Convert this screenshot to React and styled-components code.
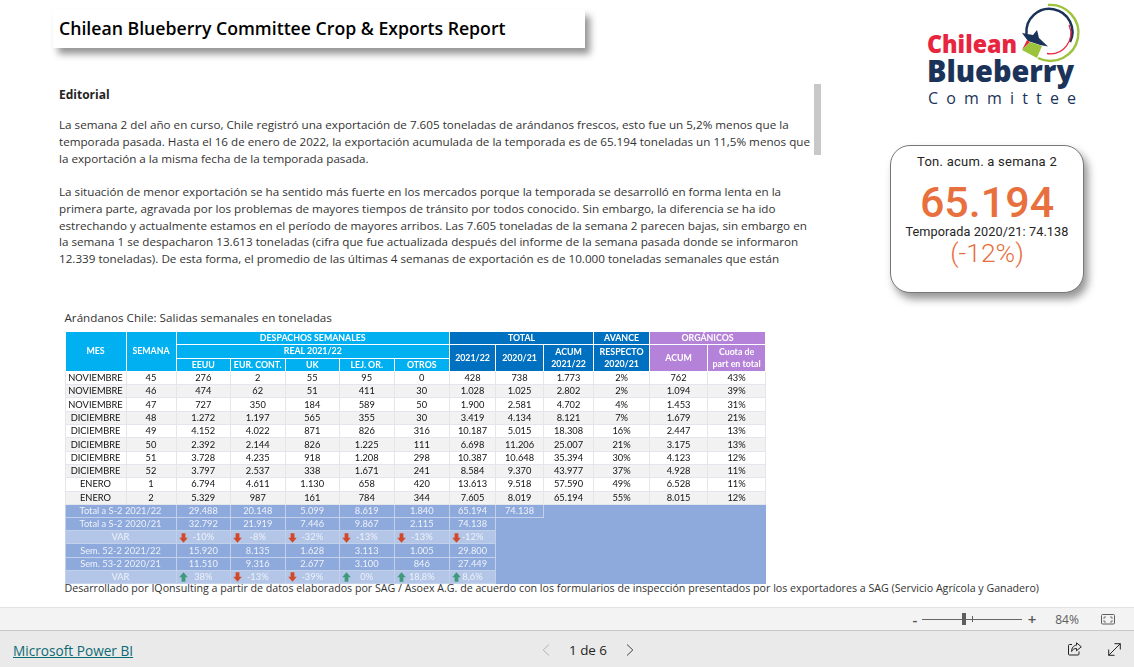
import React from 'react';
import styled, { createGlobalStyle } from 'styled-components';

const GlobalStyle = createGlobalStyle`
  html, body {
    margin: 0;
    padding: 0;
    background: #fff;
    overflow: hidden;
  }
  * { box-sizing: border-box; }
`;

const Page = styled.div`
  display: flex;
  flex-direction: column;
  width: 1134px;
  height: 667px;
  font-family: "Open Sans", "Noto Sans", sans-serif;
  color: #222;
`;
const Canvas = styled.main`
  display: grid;
  grid-template-columns: 870px 1fr;
  height: 607px;
  overflow: hidden;
`;
const LeftColumn = styled.section`
  display: flex;
  flex-direction: column;
  align-items: flex-start;
  padding-top: 10px;
  padding-left: 53px;
`;
const RightColumn = styled.aside`
  display: flex;
  flex-direction: column;
`;
const TitleBox = styled.div`
  display: flex;
  align-items: center;
  width: 532px;
  height: 38px;
  padding: 0 0 3px 6px;
  background: #fff;
  box-shadow: 5px 6px 7px rgba(0, 0, 0, 0.42);
`;
const Title = styled.h1`
  margin: 0;
  font-size: 17.68px;
  font-weight: 600;
  color: #000;
  white-space: nowrap;
`;
const Article = styled.article`
  position: relative;
  width: 762px;
  height: 188px;
  margin: 36px 0 0 6px;
  overflow: hidden;
`;
const Thumb = styled.div`
  position: absolute;
  top: 0;
  right: 0;
  width: 7px;
  height: 71px;
  background: #c8c8c8;
`;
const Heading = styled.h2`
  margin: 2px 0 14px;
  font-size: 12px;
  line-height: 17px;
  font-weight: 700;
  color: #252423;
`;
const Paragraph = styled.p`
  margin: 0 0 16px;
  font-size: 11.67px;
  line-height: 16.9px;
  color: #333;
  white-space: nowrap;
`;
const TableBlock = styled.div`
  display: flex;
  flex-direction: column;
  margin: 38px 0 0 11.5px;
`;
const Caption = styled.div`
  height: 21px;
  font-size: 11.67px;
  line-height: 16px;
  color: #333;
  white-space: nowrap;
`;
const Note = styled.div`
  font-size: 10.67px;
  line-height: 9px;
  color: #333;
  white-space: nowrap;
`;
const DataTable = styled.table`
  width: 701px;
  border-collapse: collapse;
  table-layout: fixed;
  font-family: Lato, "Open Sans", sans-serif;
  font-size: 9.3px;
  filter: blur(0.3px);
  background: #8ea9db;
`;
const HeadCell = styled.th`
  height: 13.3px;
  padding: 0;
  line-height: 12px;
  font-size: 8.8px;
  font-weight: 700;
  color: #fff;
  text-align: center;
  white-space: nowrap;
  background: ${p => p.$bg};
  border: 1px solid #fff;
`;
const BodyRow = styled.tr`
  height: 13.3px;
  background: ${p => (p.$alt ? '#f2f2f2' : '#fff')};
`;
const BodyCell = styled.td`
  height: 13.3px;
  padding: 0;
  line-height: 12px;
  text-align: center;
  color: #111;
  white-space: nowrap;
  border: 1px solid #e3e6ec;
`;
const SummaryRow = styled.tr`
  height: 13.2px;
  background: ${p => (p.$var ? '#b4c6e7' : '#8ea9db')};
`;
const SummaryCell = styled.td`
  position: relative;
  height: 13.2px;
  padding: 0;
  line-height: 12px;
  text-align: center;
  color: #eef2fa;
  white-space: nowrap;
  border: 1px solid #c3d0ea;
`;
const EmptyCell = styled.td`
  padding: 0;
  background: #8ea9db;
  border: none;
`;
const ArrowWrap = styled.svg`
  position: absolute;
  left: 2px;
  top: 1.5px;
  width: 9px;
  height: 10px;
`;
const LogoSvg = styled.svg`
  display: block;
  width: 190px;
  height: 120px;
  margin-left: 40px;
`;
const Card = styled.div`
  display: flex;
  flex-direction: column;
  align-items: center;
  width: 194px;
  height: 148px;
  margin: 25px 0 0 20px;
  padding-top: 6px;
  background: #fff;
  border: 1px solid #777;
  border-radius: 20px;
  box-shadow: 4px 6px 8px rgba(0, 0, 0, 0.42);
  font-family: Roboto, "Open Sans", sans-serif;
`;
const CardTitle = styled.div`
  font-size: 13px;
  line-height: 20px;
  color: #252423;
  letter-spacing: 0.25px;
`;
const CardValue = styled.div`
  margin-top: 7px;
  font-size: 43px;
  font-weight: 500;
  line-height: 46px;
  color: #e8703e;
`;
const CardSub = styled.div`
  margin-top: -1px;
  font-size: 12.7px;
  line-height: 15px;
  color: #252423;
  letter-spacing: 0.1px;
`;
const CardDelta = styled.div`
  font-size: 26.5px;
  line-height: 27px;
  color: #e8703e;
  font-weight: 300;
`;
const ZoomBar = styled.div`
  display: flex;
  align-items: center;
  justify-content: flex-end;
  height: 24px;
  padding-right: 19px;
  background: #f3f3f3;
  border-top: 1px solid #e3e3e3;
  border-bottom: 1px solid #c8c8c8;
  color: #605e5c;
`;
const ZoomSign = styled.span`
  width: 10px;
  font-size: 15px;
  font-weight: 600;
  line-height: 14px;
  text-align: center;
  color: #555;
`;
const Slider = styled.div`
  position: relative;
  width: 100px;
  height: 1px;
  margin: 0 5px 0 2px;
  background: #666;
`;
const SliderThumb = styled.span`
  position: absolute;
  left: 40px;
  top: -6px;
  width: 4px;
  height: 12px;
  background: #605e5c;
`;
const SliderTick = styled.span`
  position: absolute;
  left: 50px;
  top: -3px;
  width: 1px;
  height: 6px;
  background: #605e5c;
`;
const ZoomValue = styled.span`
  width: 50px;
  margin: 0 9px 0 5px;
  font-size: 12px;
  text-align: center;
`;
const Footer = styled.footer`
  display: flex;
  align-items: center;
  flex: 1;
  padding: 2px 13px 0;
  background: #eaeaea;
`;
const BrandLink = styled.a`
  width: 529px;
  font-size: 13.65px;
  color: #0e6b74;
  text-decoration: underline;
`;
const Pager = styled.nav`
  display: flex;
  align-items: center;
  gap: 19px;
  margin-top: -1px;
  font-size: 13.4px;
  color: #252423;
`;
const Actions = styled.div`
  display: flex;
  align-items: center;
  gap: 26px;
  margin-left: auto;
  margin-top: -2px;
`;

const para1 = [
  'La semana 2 del año en curso, Chile registró una exportación de 7.605 toneladas de arándanos frescos, esto fue un 5,2% menos que la',
  'temporada pasada. Hasta el 16 de enero de 2022, la exportación acumulada de la temporada es de 65.194 toneladas un 11,5% menos que',
  'la exportación a la misma fecha de la temporada pasada.',
];
const para2 = [
  'La situación de menor exportación se ha sentido más fuerte en los mercados porque la temporada se desarrolló en forma lenta en la',
  'primera parte, agravada por los problemas de mayores tiempos de tránsito por todos conocido. Sin embargo, la diferencia se ha ido',
  'estrechando y actualmente estamos en el período de mayores arribos. Las 7.605 toneladas de la semana 2 parecen bajas, sin embargo en',
  'la semana 1 se despacharon 13.613 toneladas (cifra que fue actualizada después del informe de la semana pasada donde se informaron',
  '12.339 toneladas). De esta forma, el promedio de las últimas 4 semanas de exportación es de 10.000 toneladas semanales que están',
];

const columns = [61, 50, 54.5, 54.5, 54.5, 54.5, 55.5, 46, 48, 50, 56, 58, 58];

const rows = [
  ['NOVIEMBRE', '45', '276', '2', '55', '95', '0', '428', '738', '1.773', '2%', '762', '43%'],
  ['NOVIEMBRE', '46', '474', '62', '51', '411', '30', '1.028', '1.025', '2.802', '2%', '1.094', '39%'],
  ['NOVIEMBRE', '47', '727', '350', '184', '589', '50', '1.900', '2.581', '4.702', '4%', '1.453', '31%'],
  ['DICIEMBRE', '48', '1.272', '1.197', '565', '355', '30', '3.419', '4.134', '8.121', '7%', '1.679', '21%'],
  ['DICIEMBRE', '49', '4.152', '4.022', '871', '826', '316', '10.187', '5.015', '18.308', '16%', '2.447', '13%'],
  ['DICIEMBRE', '50', '2.392', '2.144', '826', '1.225', '111', '6.698', '11.206', '25.007', '21%', '3.175', '13%'],
  ['DICIEMBRE', '51', '3.728', '4.235', '918', '1.208', '298', '10.387', '10.648', '35.394', '30%', '4.123', '12%'],
  ['DICIEMBRE', '52', '3.797', '2.537', '338', '1.671', '241', '8.584', '9.370', '43.977', '37%', '4.928', '11%'],
  ['ENERO', '1', '6.794', '4.611', '1.130', '658', '420', '13.613', '9.518', '57.590', '49%', '6.528', '11%'],
  ['ENERO', '2', '5.329', '987', '161', '784', '344', '7.605', '8.019', '65.194', '55%', '8.015', '12%'],
];

// d = red arrow, u = green arrow
const summary = [
  { label: 'Total a S-2 2021/22', cells: ['29.488', '20.148', '5.099', '8.619', '1.840', '65.194'], extra: '74.138' },
  { label: 'Total a S-2 2020/21', cells: ['32.792', '21.919', '7.446', '9.867', '2.115', '74.138'] },
  { label: 'VAR', isVar: true, cells: ['d-10%', 'd-8%', 'd-32%', 'd-13%', 'd-13%', 'd-12%'] },
  { label: 'Sem. 52-2 2021/22', cells: ['15.920', '8.135', '1.628', '3.113', '1.005', '29.800'] },
  { label: 'Sem. 53-2 2020/21', cells: ['11.510', '9.316', '2.677', '3.100', '846', '27.449'] },
  { label: 'VAR', isVar: true, cells: ['u38%', 'd-13%', 'd-39%', 'u0%', 'u18,8%', 'u8,6%'] },
];

const LIGHT = '#00b0f0';
const DARK = '#0070c0';
const PURPLE = '#b482d9';

const Arrow = ({ up }) => (
  <ArrowWrap viewBox="0 0 9 10">
    <path
      d={up ? 'M4.5 0.3 L8.8 5.2 L6.4 5.2 L6.4 9.8 L2.6 9.8 L2.6 5.2 L0.2 5.2 Z' : 'M4.5 9.8 L8.8 4.8 L6.4 4.8 L6.4 0.2 L2.6 0.2 L2.6 4.8 L0.2 4.8 Z'}
      fill={up ? '#3f9a7c' : '#d2492a'}
    />
  </ArrowWrap>
);

const VarValue = ({ value }) => {
  if (value[0] === 'd' || value[0] === 'u') {
    return (
      <SummaryCell>
        <Arrow up={value[0] === 'u'} />
        {value.slice(1)}
      </SummaryCell>
    );
  }
  return <SummaryCell>{value}</SummaryCell>;
};

const Logo = () => (
  <LogoSvg viewBox="0 0 190 120">
    <path d="M116.5 34 A23 23 0 1 1 160 42" fill="none" stroke="#1b3358" strokeWidth="2.6" />
    <path d="M138 5 A28 28 0 1 1 128 58" fill="none" stroke="#9cc33c" strokeWidth="2.4" />
    <path d="M159 25 A20.5 20.5 0 0 1 137 53.5" fill="none" stroke="#e8253f" strokeWidth="1.3" />
    <path d="M112 33 L123 35 L127 30 L129 38 L138 46.5 L130 45 L118 41 Z" fill="#1b3358" />
    <path d="M112 50 L117 40 L120 42 Z" fill="#e8253f" />
    <path d="M112 50 L120 42 L132 46 L127 58 Z" fill="#9cc33c" />
    <text x="17" y="53" fontFamily="Open Sans, sans-serif" fontWeight="800" fontSize="25" fill="#e8253f" textLength="90" lengthAdjust="spacingAndGlyphs">Chilean</text>
    <text x="17" y="82" fontFamily="Open Sans, sans-serif" fontWeight="800" fontSize="30" fill="#1b3358" textLength="147" lengthAdjust="spacingAndGlyphs">Blueberry</text>
    <text x="18" y="104" fontFamily="Open Sans, sans-serif" fontSize="16" fill="#1b3358" textLength="148" lengthAdjust="spacing">Committee</text>
  </LogoSvg>
);

const FitIcon = () => (
  <svg width="14" height="11" viewBox="0 0 14 11" fill="none" stroke="#605e5c">
    <rect x="0.5" y="0.5" width="13" height="9.5" rx="1" />
    <path d="M3 5 V3 H5 M9 3 H11 V5 M11 6 V8 H9 M5 8 H3 V6" strokeWidth="0.8" />
  </svg>
);

const ShareIcon = () => (
  <svg width="14" height="14" viewBox="0 0 14 14" fill="none" stroke="#252423">
    <path d="M4 2.5 H1.5 A1 1 0 0 0 0.5 3.5 V12 A1 1 0 0 0 1.5 13 H10 A1 1 0 0 0 11 12 V9.5" />
    <path d="M8.5 0.8 L13.3 4.8 L8.5 8.8 V6.5 C6 6.5 4.5 7.5 3.6 9.5 C3.6 6 5.5 3.3 8.5 3.2 Z" />
  </svg>
);

const ExpandIcon = () => (
  <svg width="13" height="13" viewBox="0 0 13 13" fill="none" stroke="#252423">
    <path d="M0.7 12.3 L12.3 0.7 M6.5 0.7 H12.3 V6.5 M0.7 6.5 V12.3 H6.5" />
  </svg>
);

const ChevronIcon = ({ left, color }) => (
  <svg width="8" height="12" viewBox="0 0 8 12" fill="none" stroke={color}>
    <path d={left ? 'M7 0.5 L1.2 6 L7 11.5' : 'M1 0.5 L6.8 6 L1 11.5'} />
  </svg>
);

const App = () => (
  <Page>
    <GlobalStyle />
    <Canvas>
      <LeftColumn>
        <TitleBox>
          <Title>Chilean Blueberry Committee Crop &amp; Exports Report</Title>
        </TitleBox>
        <Article>
          <Thumb />
          <Heading>Editorial</Heading>
          <Paragraph>
            {para1.map(line => <React.Fragment key={line}>{line}<br /></React.Fragment>)}
          </Paragraph>
          <Paragraph>
            {para2.map(line => <React.Fragment key={line}>{line}<br /></React.Fragment>)}
          </Paragraph>
        </Article>
        <TableBlock>
          <Caption>Arándanos Chile: Salidas semanales en toneladas</Caption>
          <DataTable>
            <colgroup>
              {columns.map((w, i) => <col key={i} style={{ width: w }} />)}
            </colgroup>
            <thead>
              <tr>
                <HeadCell $bg={LIGHT} rowSpan={3}>MES</HeadCell>
                <HeadCell $bg={LIGHT} rowSpan={3}>SEMANA</HeadCell>
                <HeadCell $bg={LIGHT} colSpan={5}>DESPACHOS SEMANALES</HeadCell>
                <HeadCell $bg={DARK} colSpan={3}>TOTAL</HeadCell>
                <HeadCell $bg={DARK}>AVANCE</HeadCell>
                <HeadCell $bg={PURPLE} colSpan={2}>ORGÁNICOS</HeadCell>
              </tr>
              <tr>
                <HeadCell $bg={LIGHT} colSpan={5}>REAL 2021/22</HeadCell>
                <HeadCell $bg={DARK} rowSpan={2}>2021/22</HeadCell>
                <HeadCell $bg={DARK} rowSpan={2}>2020/21</HeadCell>
                <HeadCell $bg={DARK} rowSpan={2}>ACUM<br />2021/22</HeadCell>
                <HeadCell $bg={DARK} rowSpan={2}>RESPECTO<br />2020/21</HeadCell>
                <HeadCell $bg={PURPLE} rowSpan={2}>ACUM</HeadCell>
                <HeadCell $bg={PURPLE} rowSpan={2}>Cuota de<br />part en total</HeadCell>
              </tr>
              <tr>
                {['EEUU', 'EUR. CONT.', 'UK', 'LEJ. OR.', 'OTROS'].map(h => (
                  <HeadCell $bg={LIGHT} key={h}>{h}</HeadCell>
                ))}
              </tr>
            </thead>
            <tbody>
              {rows.map((row, i) => (
                <BodyRow key={i} $alt={i % 2 === 1}>
                  {row.map((v, j) => <BodyCell key={j}>{v}</BodyCell>)}
                </BodyRow>
              ))}
              {summary.map((row, i) => (
                <SummaryRow key={i} $var={row.isVar}>
                  <SummaryCell colSpan={2}>{row.label}</SummaryCell>
                  {row.cells.map((v, j) => <VarValue key={j} value={v} />)}
                  {row.extra ? <SummaryCell>{row.extra}</SummaryCell> : <EmptyCell />}
                  <EmptyCell colSpan={4} />
                </SummaryRow>
              ))}
            </tbody>
          </DataTable>
          <Note>Desarrollado por IQonsulting a partir de datos elaborados por SAG / Asoex A.G. de acuerdo con los formularios de inspección presentados por los exportadores a SAG (Servicio Agrícola y Ganadero)</Note>
        </TableBlock>
      </LeftColumn>
      <RightColumn>
        <Logo />
        <Card>
          <CardTitle>Ton. acum. a semana 2</CardTitle>
          <CardValue>65.194</CardValue>
          <CardSub>Temporada 2020/21: 74.138</CardSub>
          <CardDelta>(-12%)</CardDelta>
        </Card>
      </RightColumn>
    </Canvas>
    <ZoomBar>
      <ZoomSign>-</ZoomSign>
      <Slider>
        <SliderThumb />
        <SliderTick />
      </Slider>
      <ZoomSign>+</ZoomSign>
      <ZoomValue>84%</ZoomValue>
      <FitIcon />
    </ZoomBar>
    <Footer>
      <BrandLink>Microsoft Power BI</BrandLink>
      <Pager>
        <ChevronIcon left color="#b5b5b5" />
        <span>1 de 6</span>
        <ChevronIcon color="#444" />
      </Pager>
      <Actions>
        <ShareIcon />
        <ExpandIcon />
      </Actions>
    </Footer>
  </Page>
);

export default App;
